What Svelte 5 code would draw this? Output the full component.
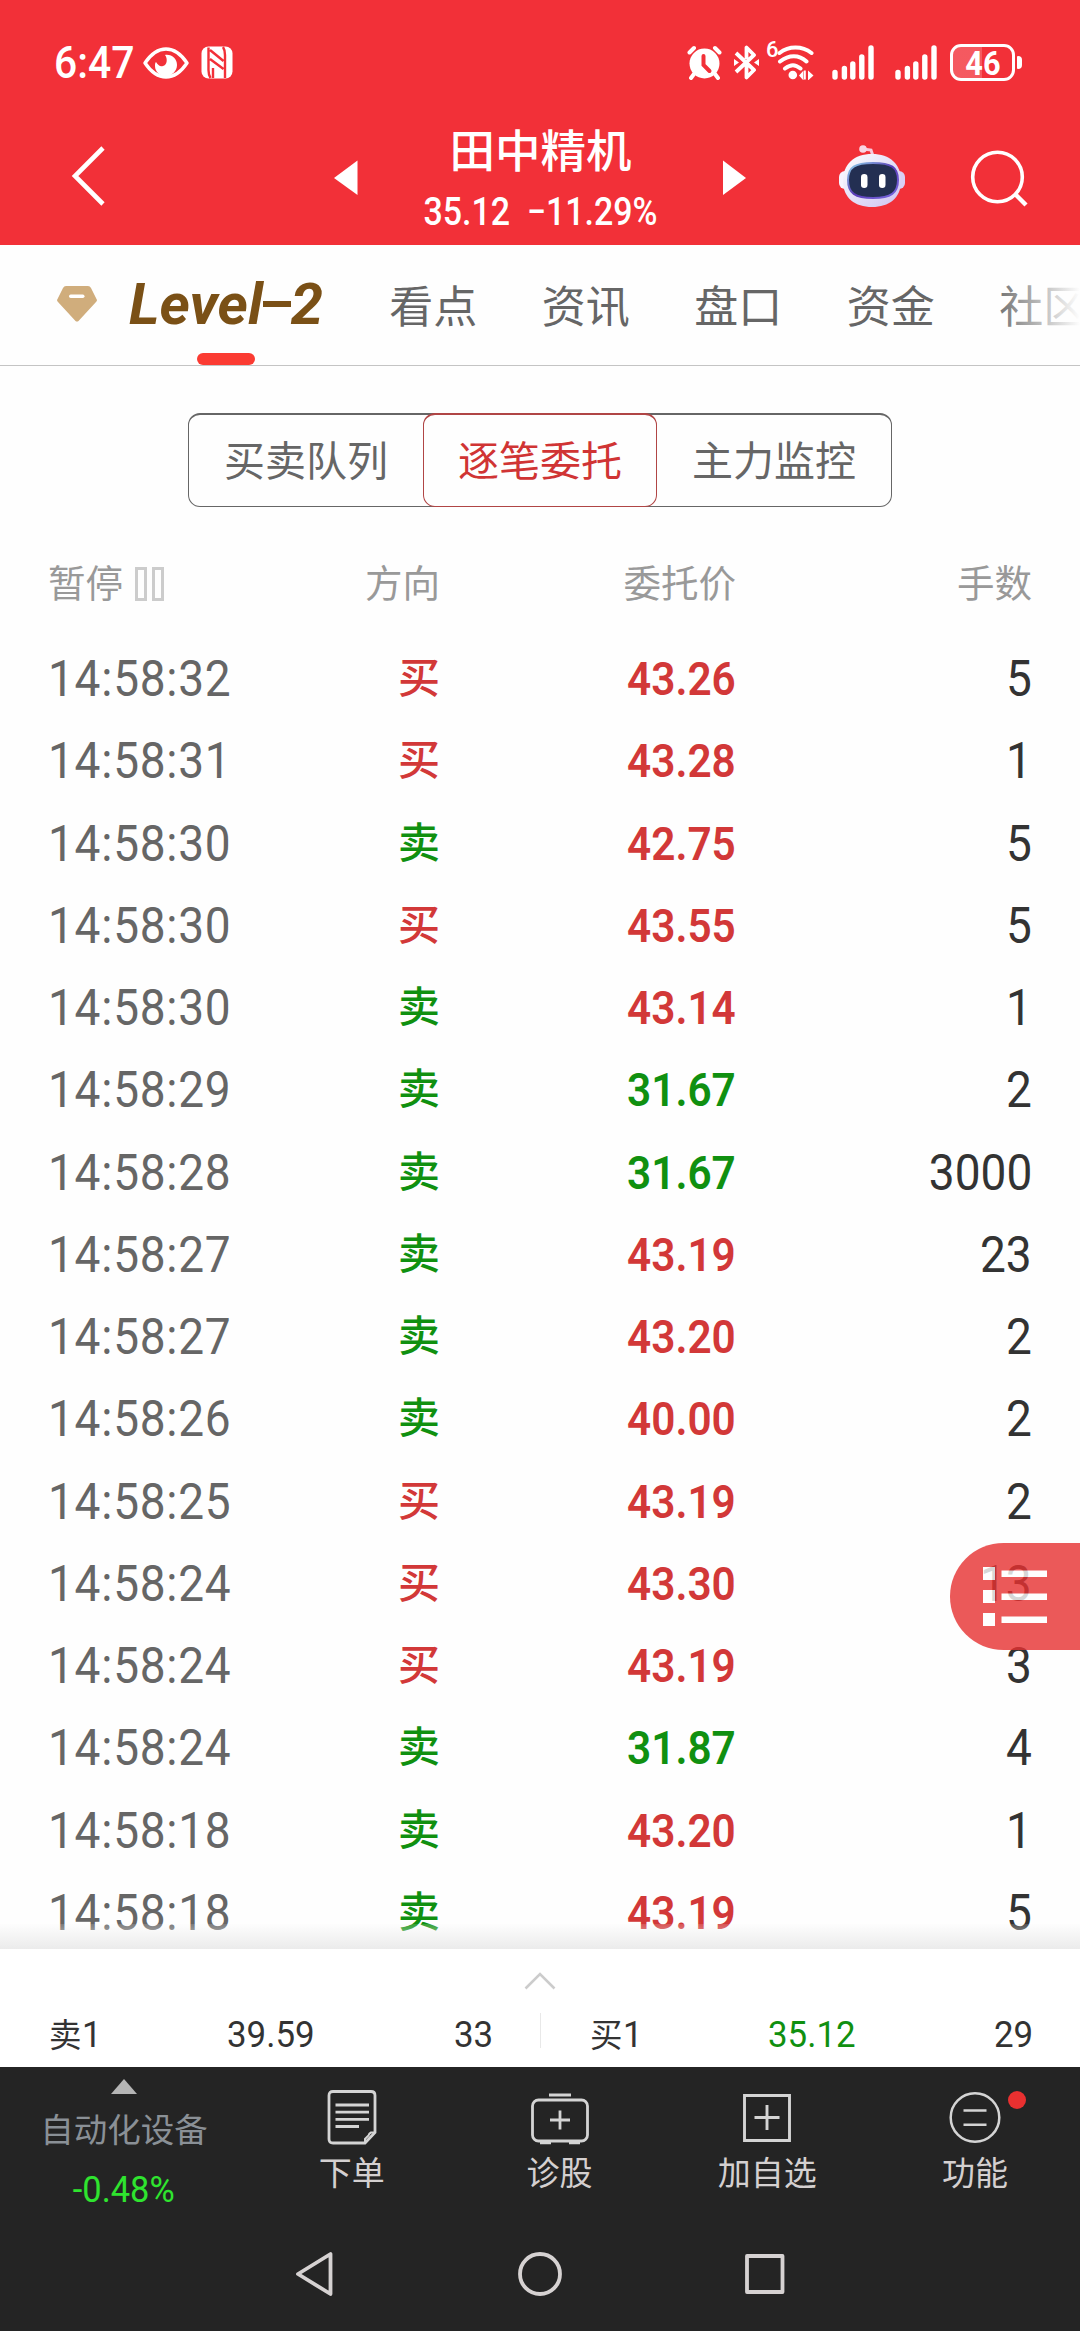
<script>
    const stock = { name: '田中精机', price: '35.12', change: '−11.29%' };

    const tabs = ['看点', '资讯', '盘口', '资金', '社区'];
    const modes = ['买卖队列', '逐笔委托', '主力监控'];
    let activeMode = $state(1);

    // time, side, price, price direction, lots
    const orders = [
        ['14:58:32', '买', '43.26', 'up', 5],
        ['14:58:31', '买', '43.28', 'up', 1],
        ['14:58:30', '卖', '42.75', 'up', 5],
        ['14:58:30', '买', '43.55', 'up', 5],
        ['14:58:30', '卖', '43.14', 'up', 1],
        ['14:58:29', '卖', '31.67', 'down', 2],
        ['14:58:28', '卖', '31.67', 'down', 3000],
        ['14:58:27', '卖', '43.19', 'up', 23],
        ['14:58:27', '卖', '43.20', 'up', 2],
        ['14:58:26', '卖', '40.00', 'up', 2],
        ['14:58:25', '买', '43.19', 'up', 2],
        ['14:58:24', '买', '43.30', 'up', 13],
        ['14:58:24', '买', '43.19', 'up', 3],
        ['14:58:24', '卖', '31.87', 'down', 4],
        ['14:58:18', '卖', '43.20', 'up', 1],
        ['14:58:18', '卖', '43.19', 'up', 5]
    ];

    const quotes = [
        { side: '卖', price: '39.59', lots: 33, dir: 'flat' },
        { side: '买', price: '35.12', lots: 29, dir: 'down' }
    ];
</script>

{#snippet signal()}
    <svg width="42" height="35" viewBox="0 0 42 35" stroke="#fff" stroke-width="5.4" stroke-linecap="round">
        <path d="M3 27.5v4.5M12.4 23.5v8.5M20.8 19v13M29.8 12v20M39 3v29" />
    </svg>
{/snippet}

<div class="screen">
    <header>
        <div class="status">
            <span class="clock num">6:47</span>
            <svg class="eye" width="46" height="32" viewBox="0 0 46 32">
                <path d="M2 16C8 7 15 2 23 2s15 5 21 14c-6 9-13 14-21 14S8 25 2 16z" fill="none" stroke="#fff" stroke-width="3.4" stroke-linejoin="round" />
                <path d="M22 8c7-1 12 4 12 10 0 6-5 11-11 11s-11-4-11-10c0-2 0-3 1-4 2 3 4 5 7 4 4-1 5-7 2-11z" fill="#fff" />
            </svg>
            <svg class="nfc" width="32" height="33" viewBox="0 0 32 33">
                <rect x=".5" y=".5" width="31" height="32" rx="7" fill="#fff" />
                <path d="M7.500 1.500V24q0 5 2 8M24 32V9q0-5-2-8M9 4l13.500 11M9 13l13.500 10M12 22v10" fill="none" stroke="#f23038" stroke-width="2.400" />
            </svg>

            <svg class="alarm" width="35" height="35" viewBox="0 0 35 35">
                <circle cx="17.500" cy="18.500" r="15" fill="#fff" />
                <path d="M2.500 7.500L7 3M32.500 7.500L28 3M7 29l-3 4M28 29l3 4" stroke="#fff" stroke-width="4" stroke-linecap="round" />
                <path d="M16.500 11v9l6 6" fill="none" stroke="#f23038" stroke-width="4" stroke-linecap="round" />
            </svg>
            <svg class="bt" width="25" height="35" viewBox="0 0 25 35" fill="none" stroke="#fff" stroke-width="3.800" stroke-linejoin="round">
                <path d="M2 8l18 17-7.500 7.500V20M2 27L20 10l-7.500-7.500V14" />
                <path d="M0 14l5 3.500L0 21zM25 14l-5 3.500 5 3.500z" fill="#fff" stroke="none" />
            </svg>
            <span class="six">6</span>
            <svg class="wifi" width="37" height="35" viewBox="0 0 37 35" fill="none" stroke="#fff" stroke-width="4" stroke-linecap="round">
                <path d="M2.500 8C12 .8 25 .8 34.500 8M3 16.500c9-7 19-7 26.500 0M8 23.500c6-4.500 10-4.500 15.500 0" />
                <circle cx="15.800" cy="30" r="4.300" fill="#fff" stroke="none" />
                <path d="M22 30.500l4.500-5v10zM36.500 30.500l-5.500-5v10zM27 25.500h1.800v9H27z" fill="#fff" stroke="none" />
            </svg>
            <span class="sig">{@render signal()}</span>
            <span class="sig two">{@render signal()}</span>
            <div class="battery"><span class="num">46</span></div>
            <i class="cap"></i>
        </div>

        <div class="bar">
            <svg class="back" width="36" height="64" viewBox="0 0 36 64">
                <path d="M32 4L4 32l28 28" fill="none" stroke="#fff" stroke-width="4.600" />
            </svg>
            <svg class="prev" width="24" height="36" viewBox="0 0 24 36"><path d="M23.500 .5v34.500L0 18z" fill="#fff" /></svg>
            <div class="title">
                <h1>{stock.name}</h1>
                <p><span class="num">{stock.price}&nbsp; {stock.change}</span></p>
            </div>
            <svg class="next" width="24" height="36" viewBox="0 0 24 36"><path d="M0 .5v34.500L23 18z" fill="#fff" /></svg>
            <svg class="robot" width="68" height="66" viewBox="0 0 68 66">
                <defs>
                    <linearGradient id="shell" x1="0" y1="0" x2="1" y2="1">
                        <stop offset="0" stop-color="#fff" />
                        <stop offset=".5" stop-color="#e4e0f8" />
                        <stop offset="1" stop-color="#cfc3f0" />
                    </linearGradient>
                    <linearGradient id="rim" x1="0" y1="0" x2="1" y2="1">
                        <stop offset="0" stop-color="#8fd6ea" />
                        <stop offset=".5" stop-color="#5a3bb8" />
                        <stop offset="1" stop-color="#7a6be0" />
                    </linearGradient>
                </defs>
                <path d="M25 6l8 1 2 6" fill="none" stroke="#f8c9dc" stroke-width="3" />
                <circle cx="25" cy="6" r="3.800" fill="#f9d5e3" />
                <rect x="1" y="28" width="12" height="18" rx="6" fill="#f6f3ff" />
                <rect x="55" y="28" width="12" height="18" rx="6" fill="#d9cff4" />
                <path d="M34 11c18 0 29 10 29 27S51 64 34 64 5 55 5 38s11-27 29-27z" fill="url(#shell)" />
                <path d="M35 20c18 0 25 4 25 17s-7 18-25 18S10 50 10 37s7-17 25-17z" fill="#232f52" stroke="url(#rim)" stroke-width="2" />
                <rect x="23" y="31" width="6.500" height="14" rx="3.200" fill="#fff" />
                <rect x="41" y="31" width="6.500" height="14" rx="3.200" fill="#fff" />
            </svg>
            <svg class="search" width="58" height="60" viewBox="0 0 58 60" fill="none" stroke="#fff">
                <circle cx="27.500" cy="29" r="24.800" stroke-width="3.600" />
                <path d="M44.500 45.500L56 57" stroke-width="4.400" />
            </svg>
        </div>
    </header>

    <nav class="tabs">
        <svg class="gem" width="40" height="36" viewBox="0 0 40 36">
            <path d="M9 0h22q2 0 3 2l6 12q0 1-1 2L21.500 35q-1.500 1-3 0L1 16q-1-1-1-2L6 2q1-2 3-2z" fill="#d0ad7c" />
            <rect x="12" y="8.500" width="15.500" height="3.500" rx="1.700" fill="#fff" />
        </svg>
        <span class="level">Level<i></i>2</span>
        {#each tabs as tab}
            <span class="tab">{tab}</span>
        {/each}
    </nav>

    <main>
        <div class="modes">
            {#each modes as mode, i}
                <button class:active={activeMode === i} onclick={() => (activeMode = i)}>{mode}</button>
            {/each}
        </div>

        <div class="row head">
            <span class="pause">暂停<i></i><i></i></span>
            <span>方向</span>
            <span>委托价</span>
            <span>手数</span>
        </div>
        {#each orders as [time, side, price, dir, lots]}
            <div class="row">
                <span class="time"><b class="num">{time}</b></span>
                <span class="side" class:sell={side === '卖'}>{side}</span>
                <span class="price {dir}"><b class="num">{price}</b></span>
                <span class="lots"><b class="num">{lots}</b></span>
            </div>
        {/each}

        <div class="float">
            <svg width="65" height="60" viewBox="0 0 65 60" fill="#fff">
                <path d="M0 0h12v13H0zM0 23h12v13H0zM0 46h12v13H0zM18.500 3.500H64v6.500H18.500zM18.500 26.500H64V33H18.500zM18.500 49.500H64V56H18.500z" />
            </svg>
        </div>
    </main>

    <section class="quotes">
        <svg class="chev" width="32" height="18" viewBox="0 0 32 18"><path d="M1.500 16.500L16 2l14.500 14.500" fill="none" stroke="#ccc" stroke-width="2.600" /></svg>
        <div class="pair">
            {#each quotes as q}
                <div class="quote">
                    <span>{q.side}<b class="num">1</b></span>
                    <span class={q.dir}><b class="num">{q.price}</b></span>
                    <span><b class="num">{q.lots}</b></span>
                </div>
            {/each}
        </div>
    </section>

    <footer>
        <div class="tools">
            <div class="sector">
                <i class="tri"></i>
                <span>自动化设备</span>
                <em><b class="num">-0.48%</b></em>
            </div>
            <div class="tool">
                <svg width="58" height="58" viewBox="0 0 58 58" fill="none" stroke="#d4d4d4" stroke-width="2.800">
                    <path d="M10 2.500h38q4 0 4 4v37L42 54H10q-4 0-4-4V6.500q0-4 4-4z" />
                    <path d="M52 43.500h-4q-2 1-2.500 3L42 50v4" stroke-width="2" />
                    <path d="M12.500 16H46M12.500 23.200H46M12.500 30.400H46M12.500 37.500H36" />
                </svg>
                <span>下单</span>
            </div>
            <div class="tool">
                <svg width="58" height="58" viewBox="0 0 58 58" fill="none" stroke="#d4d4d4" stroke-width="2.800">
                    <rect x="1.500" y="11" width="55" height="41" rx="6" />
                    <path d="M18 6h22M29 21.500v19M19 31h20" />
                    <path d="M9 53.700h11M38 53.700h11" stroke-width="3" />
                </svg>
                <span>诊股</span>
            </div>
            <div class="tool">
                <svg width="58" height="58" viewBox="0 0 58 58" fill="none" stroke="#d4d4d4" stroke-width="2.900">
                    <path d="M6.500 6.500h45v45h-45zM29 16v25M16.500 28.500h25" />
                </svg>
                <span>加自选</span>
            </div>
            <div class="tool">
                <svg width="58" height="58" viewBox="0 0 58 58" fill="none" stroke="#d4d4d4" stroke-width="2.500">
                    <circle cx="29" cy="28.500" r="24.300" />
                    <path d="M17.500 21.500h23M17.500 35.700h23" />
                </svg>
                <span>功能</span>
                <i class="dot"></i>
            </div>
        </div>
        <div class="sysnav">
            <svg width="52" height="52" viewBox="0 0 52 52"><path d="M41.500 6v40L9 26z" /></svg>
            <svg width="52" height="52" viewBox="0 0 52 52"><circle cx="26" cy="26" r="20" /></svg>
            <svg width="52" height="52" viewBox="0 0 52 52"><rect x="8" y="8" width="35.500" height="36" /></svg>
        </div>
    </footer>
</div>

<style>
    :global(body) {
        margin: 0;
        background: #fefefe;
    }

    .screen {
        width: 1080px;
        height: 2331px;
        overflow: hidden;
        display: flex;
        flex-direction: column;
        font-family: Roboto, "Noto Sans CJK SC", sans-serif;
        color: #333;
    }

    svg {
        display: block;
        flex: none;
    }

    b, em {
        font-weight: inherit;
        font-style: normal;
    }

    /* narrow digits */
    .num {
        display: inline-block;
        transform: scaleX(0.93);
        transform-origin: left;
    }

    header {
        height: 245px;
        flex: none;
        background: #f23038;
        color: #fff;
    }

    .status {
        display: flex;
        align-items: center;
        height: 125px;
        padding-left: 54px;
    }

    .clock {
        width: 89px;
        font-size: 44px;
        font-weight: 500;
        line-height: 60px;
    }

    .nfc { margin-left: 12px; }
    .alarm { margin-left: 454px; }
    .bt { margin-left: 12px; }

    .six {
        width: 12px;
        margin: -26px 0 0 7px;
        font-size: 22px;
        font-weight: 500;
        line-height: 24px;
    }

    .wifi { margin-left: -1px; }
    .sig { margin-left: 18px; }
    .sig.two { margin-left: 21px; }

    .battery {
        box-sizing: border-box;
        width: 65px;
        height: 37px;
        margin-left: 13px;
        border: 3px solid #fff;
        border-radius: 11px;
        background: linear-gradient(90deg, rgba(255, 255, 255, 0.2) 49%, transparent 49%);
        font-size: 33px;
        font-weight: 700;
        line-height: 33px;
        text-align: center;
    }

    .battery .num { transform-origin: center; }

    .cap {
        width: 5px;
        height: 13px;
        margin-left: 2px;
        border-radius: 1px 4px 4px 1px;
        background: #fff;
    }

    .bar {
        display: flex;
        align-items: center;
        height: 102px;
        padding-left: 71px;
    }

    .prev { margin: 3px 0 0 227px; }
    .next { margin-top: 3px; }
    .robot { margin-left: 91px; }
    .search { margin: 3px 0 0 64px; }

    .title {
        width: 365px;
        padding-top: 7px;
        text-align: center;
    }

    h1 {
        margin: 0;
        font-size: 45.5px;
        font-weight: 500;
        line-height: 60px;
    }

    .title p {
        margin: 4px 0 0;
        font-size: 39px;
        font-weight: 500;
        line-height: 50px;
        white-space: nowrap;
    }

    .title .num {
        transform: scaleX(0.87);
        transform-origin: center;
    }

    .tabs {
        box-sizing: border-box;
        position: relative;
        display: flex;
        align-items: center;
        flex: none;
        height: 121px;
        padding: 0 0 3px 57px;
        border-bottom: 1px solid #c4c4c4;
        overflow: hidden;
    }

    /* active marker */
    .tabs::before {
        content: '';
        position: absolute;
        left: 197px;
        bottom: 0;
        width: 58px;
        height: 12px;
        border-radius: 6px;
        background: #fb3b32;
    }

    /* fade where the strip scrolls off */
    .tabs::after {
        content: '';
        position: absolute;
        right: 0;
        top: 0;
        width: 90px;
        height: 110px;
        background: linear-gradient(90deg, rgba(254, 254, 254, 0), #fefefe);
    }

    .level {
        display: flex;
        align-items: center;
        width: 202px;
        margin-left: 32px;
        color: #7a5016;
        font-size: 58px;
        font-style: italic;
        font-weight: 700;
        line-height: 70px;
    }

    .level i {
        width: 28px;
        height: 6px;
        background: #7a5016;
    }

    .tab {
        flex: none;
        margin-left: 64.5px;
        color: #666;
        font-size: 44px;
    }

    .level + .tab { margin-left: 66px; }

    main {
        position: relative;
        height: 1583px;
        flex: none;
        overflow: hidden;
    }

    /* soft shadow above the quote panel */
    main::after {
        content: '';
        position: absolute;
        left: 0;
        right: 0;
        bottom: 0;
        height: 25px;
        background: linear-gradient(rgba(248, 248, 248, 0.15), rgba(234, 234, 234, 0.95));
    }

    .modes {
        display: flex;
        box-sizing: border-box;
        width: 704px;
        height: 94px;
        margin: 47px auto 0;
        border: 1px solid #666;
        border-top-width: 2px;
        border-radius: 12px;
    }

    .modes button {
        flex: 1;
        margin: -2px 0 -1px;
        padding: 0 0 6px;
        border: 1px solid transparent;
        border-top-width: 2px;
        border-radius: 12px;
        background: none;
        color: #666;
        font: 41px Roboto, "Noto Sans CJK SC", sans-serif;
    }

    .modes .active {
        border-color: #b04545;
        color: #d03434;
    }

    .row {
        display: grid;
        grid-template-columns: 192px 200px 296px 296px;
        padding-left: 48px;
        height: 82.25px;
        line-height: 82.25px;
        text-align: right;
    }

    .head {
        height: 84px;
        margin: 35px 0 12px;
        line-height: 84px;
        color: #999;
        font-size: 37.5px;
    }

    .row .num { transform-origin: right; }

    .pause {
        display: flex;
        align-items: center;
    }

    .pause i {
        box-sizing: border-box;
        width: 12px;
        height: 34px;
        margin: 0 -6px 0 12px;
        border: 3px solid #ccc;
    }

    .pause i:last-child { margin-left: 11px; }

    .time {
        color: #666;
        font-size: 49.5px;
        letter-spacing: 0.8px;
        text-align: left;
    }

    .row .time .num { transform-origin: left; }

    .side {
        color: #d23838;
        font-size: 42px;
        font-weight: 500;
    }

    .price {
        font-size: 47px;
        font-weight: 600;
    }

    .row .price .num { transform: scaleX(0.9); }

    .lots { font-size: 49.5px; }

    .up { color: #d23838; }
    .sell, .down { color: #109010; }

    .float {
        position: absolute;
        right: 0;
        top: 1177px;
        display: flex;
        align-items: center;
        box-sizing: border-box;
        width: 130px;
        height: 107px;
        padding-left: 33px;
        border-radius: 54px 0 0 54px;
        background: #e73131;
        opacity: 0.8;
    }

    .quotes {
        flex: none;
        height: 118px;
        background: #fff;
    }

    .chev { margin: 23px auto 0; }

    .pair {
        display: flex;
        margin-top: 23px;
    }

    .quote {
        box-sizing: border-box;
        display: flex;
        justify-content: space-between;
        width: 540px;
        height: 35px;
        padding: 0 47px 0 49px;
        font-size: 32.5px;
        line-height: 42px;
    }

    .quote + .quote { border-left: 1px solid #e8e8e8; }

    .quote span { width: 88px; }
    .quote span:last-child { text-align: right; }
    .quote .num { font-size: 37.5px; }
    .quote span:last-child .num { transform-origin: right; }

    footer {
        flex: 1;
        background: #242424;
        color: #d4d0d0;
    }

    .tools {
        display: flex;
        height: 166px;
    }

    .sector {
        display: flex;
        flex-direction: column;
        align-items: center;
        width: 248px;
        color: #8a9096;
        font-size: 33.5px;
        line-height: 48px;
    }

    .tri {
        margin: 12px 0 13px;
        border: 13px solid transparent;
        border-top: 0;
        border-bottom: 15px solid #b5b5b5;
    }

    .sector em {
        margin-top: 11px;
        color: #2fe42f;
        font-size: 37px;
    }

    .sector .num { transform-origin: center; }

    .tool {
        position: relative;
        display: flex;
        flex-direction: column;
        align-items: center;
        width: 207.7px;
        padding-top: 22px;
        font-size: 33px;
        line-height: 48px;
    }

    .tool span { margin-top: 3px; }

    .dot {
        position: absolute;
        left: 137px;
        top: 24px;
        width: 18px;
        height: 18px;
        border-radius: 50%;
        background: #e93030;
    }

    .sysnav {
        display: flex;
        justify-content: center;
        gap: 173px;
        padding-top: 15px;
    }

    .sysnav svg {
        fill: none;
        stroke: #d6d2d2;
        stroke-width: 3.8;
        stroke-linejoin: round;
    }
</style>
